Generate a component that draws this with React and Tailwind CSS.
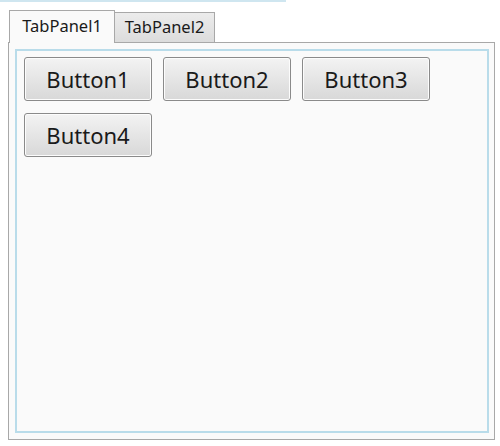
export default function App() {
  const btn =
    "w-[128px] h-[44px] rounded-[3px] border border-[#8a8a8a] bg-gradient-to-b from-[#f3f3f3] to-[#d8d8d8] text-[22px] text-[#1a1a1a] flex items-center justify-center shadow-[inset_0_0_0_1px_#fcfcfc]";
  return (
    <div className="w-[500px] h-[446px] bg-white relative" style={{ fontFamily: '"Noto Sans", "Noto Sans CJK JP", sans-serif' }}>
      <div className="h-[2px] w-[286px] bg-[#cfe6f0]" />
      <div className="pl-[9px] pt-[7px] flex items-end h-[40px]">
        <div className="h-[33px] w-[106px] border border-b-0 border-[#a8a8a8] bg-[#fafafa] text-[16.5px] text-[#1a1a1a] flex items-center justify-center pb-[2px] relative z-10 -mb-px">
          TabPanel1
        </div>
        <div className="h-[30px] w-[100px] border border-l-0 border-b-0 border-[#a8a8a8] bg-gradient-to-b from-[#ececec] to-[#dcdcdc] text-[16.5px] text-[#1a1a1a] flex items-center justify-center pb-[1px]">
          TabPanel2
        </div>
      </div>
      <div className="ml-[8px] w-[487px] h-[398px] border border-[#a8a8a8] bg-[#fafafa] p-[6px]">
        <div className="h-full border-2 border-[#b9dcea] pl-[7px] pt-[6px] flex flex-wrap content-start gap-x-[11px] gap-y-[12px] w-[474px]">
          <button className={btn}>Button1</button>
          <button className={btn}>Button2</button>
          <button className={btn}>Button3</button>
          <button className={btn}>Button4</button>
        </div>
      </div>
    </div>
  );
}
